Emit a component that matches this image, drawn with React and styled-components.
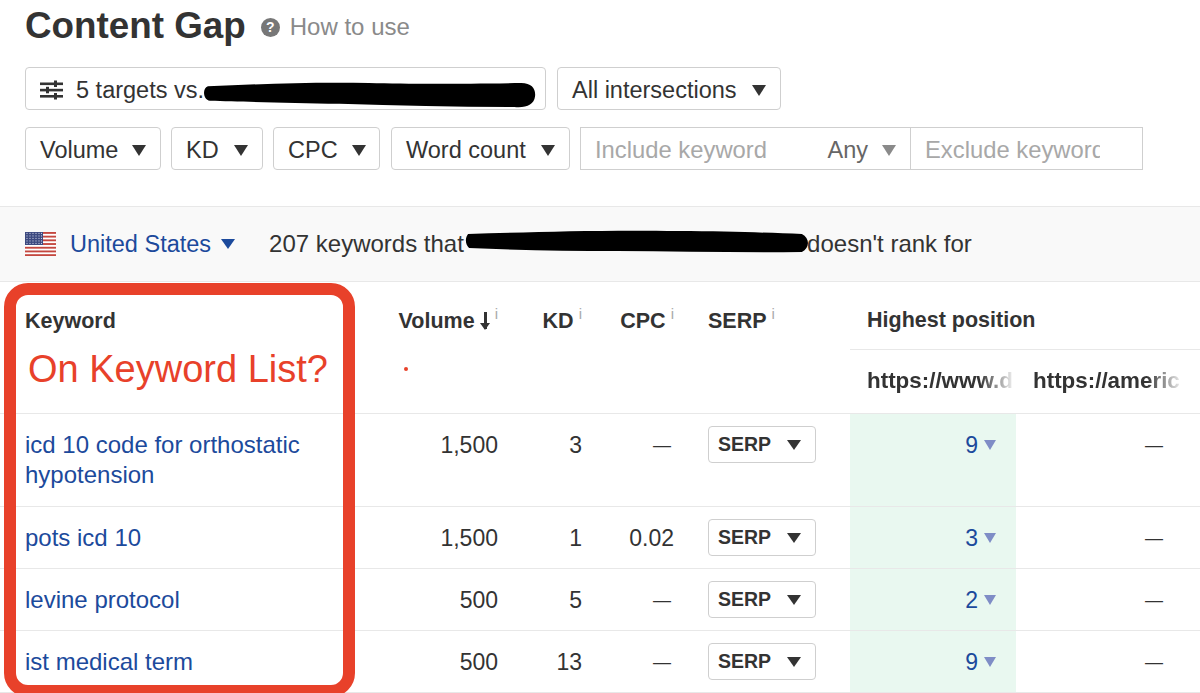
import styled, { createGlobalStyle } from "styled-components";

const GlobalStyle = createGlobalStyle`
  html, body { margin: 0; padding: 0; background: #fff; }
  body { font-family: "Liberation Sans", Arial, sans-serif; color: #333; overflow: hidden; }
`;

const rows = [
  { keyword: "icd 10 code for orthostatic hypotension", volume: "1,500", kd: "3", cpc: "—", pos: "9", tall: true },
  { keyword: "pots icd 10", volume: "1,500", kd: "1", cpc: "0.02", pos: "3" },
  { keyword: "levine protocol", volume: "500", kd: "5", cpc: "—", pos: "2" },
  { keyword: "ist medical term", volume: "500", kd: "13", cpc: "—", pos: "9" },
];

function App() {
  return (
    <Page>
      <GlobalStyle />
      <Top>
        <TitleRow>
          <Title>Content Gap</Title>
          <HelpDot>?</HelpDot>
          <HowTo>How to use</HowTo>
        </TitleRow>
        <FilterRow>
          <TargetButton>
            <SlidersIcon />
            5 targets vs.
            <TargetScribble viewBox="0 0 340 26" preserveAspectRatio="none">
              <path d="M6 5 C60 3 110 1 170 2 C210 3 260 3 325 2 C336 2 340 8 339 15 C338 23 330 26 318 25 C260 25 200 24 140 22 C90 21 40 20 8 19 C1 18 0 7 6 5 Z" />
            </TargetScribble>
          </TargetButton>
          <IntersectionsDrop>All intersections<Caret /></IntersectionsDrop>
        </FilterRow>
        <FilterRow>
          <Drop $w={136}>Volume<Caret /></Drop>
          <Drop $w={92}>KD<Caret /></Drop>
          <Drop $w={107}>CPC<Caret /></Drop>
          <WordCountDrop $w={179}>Word count<Caret /></WordCountDrop>
          <KeywordGroup>
            <IncludeBox>
              <Placeholder>Include keyword</Placeholder>
              <AnyLabel>Any<Caret $color="#8a8a8a" /></AnyLabel>
            </IncludeBox>
            <ExcludeBox>
              <Placeholder>Exclude keyword</Placeholder>
            </ExcludeBox>
          </KeywordGroup>
        </FilterRow>
      </Top>

      <InfoBar>
        <Flag />
        <Country>United States<Caret $color="#1c4a9c" $small /></Country>
        <Summary>
          207 keywords that
          <SummaryScribble viewBox="0 0 340 24" preserveAspectRatio="none">
            <path d="M3 4 C70 2 130 0 210 1 C260 1 300 3 332 4 C340 8 340 18 332 22 C270 23 210 21 150 21 C100 21 50 20 4 18 C0 14 0 8 3 4 Z" />
          </SummaryScribble>
          <SummaryEnd>doesn't rank for</SummaryEnd>
        </Summary>
      </InfoBar>

      <HeadRow>
        <KeywordHead>
          <HeadLabel>Keyword</HeadLabel>
          <Annotation>On Keyword List?</Annotation>
        </KeywordHead>
        <NumHead>Volume<SortArrow /><Info>i</Info></NumHead>
        <NumHead>KD<Info>i</Info></NumHead>
        <NumHead>CPC<Info>i</Info></NumHead>
        <SerpHead>SERP<Info>i</Info></SerpHead>
        <GroupHead>
          <GroupTitle>Highest position</GroupTitle>
          <UrlRow>
            <UrlCell $w={166}>https://www.d</UrlCell>
            <UrlCell $w={168}>https://americ</UrlCell>
          </UrlRow>
        </GroupHead>
        <RedDot />
      </HeadRow>

      {rows.map((r) => (
        <Row key={r.keyword} $tall={r.tall}>
          <KeywordCell><a href="#k">{r.keyword}</a></KeywordCell>
          <NumCell>{r.volume}</NumCell>
          <NumCell>{r.kd}</NumCell>
          <NumCell $dash={r.cpc === "—"}>{r.cpc}</NumCell>
          <SerpCell><SerpButton>SERP<Caret $small /></SerpButton></SerpCell>
          <PosCell>{r.pos}<Caret $color="#7f8dc6" $small /></PosCell>
          <DashCell>—</DashCell>
        </Row>
      ))}

      <RedFrame />
    </Page>
  );
}

function SlidersIcon() {
  return (
    <svg width="23" height="20" viewBox="0 0 23 20" style={{ flex: "none" }}>
      <g fill="#333">
        <rect x="0" y="2.5" width="23" height="2.6" />
        <rect x="0" y="8.8" width="23" height="2.6" />
        <rect x="0" y="15" width="23" height="2.6" />
        <rect x="14" y="0.5" width="3" height="6.5" />
        <rect x="6" y="6.8" width="3" height="6.5" />
        <rect x="14" y="13" width="3" height="6.5" />
      </g>
    </svg>
  );
}

function Flag() {
  const stripes = [0, 2, 4, 6, 8, 10, 12];
  const dotRows = [2, 4.5, 7, 9.5, 12];
  const dotCols = [2, 5, 8, 11, 14, 16.5];
  return (
    <svg width="31" height="24" viewBox="0 0 31 24" style={{ flex: "none" }}>
      <rect width="31" height="24" fill="#fff" />
      {stripes.map((s) => (
        <rect key={s} y={s * 1.85} width="31" height="1.85" fill="#c4473f" />
      ))}
      <rect width="18" height="13" fill="#3d4a80" />
      {dotRows.map((y) =>
        dotCols.map((x) => <circle key={`${x}-${y}`} cx={x} cy={y - 0.6} r="0.6" fill="#c8cde0" />)
      )}
    </svg>
  );
}

const Page = styled.div`
  position: relative;
  width: 1200px;
  height: 693px;
  overflow: hidden;
  background: #fff;
`;

const Top = styled.div`
  height: 206px;
  padding-left: 25px;
  box-sizing: border-box;
`;

const TitleRow = styled.div`
  display: flex;
  align-items: center;
  height: 52px;
`;

const Title = styled.h1`
  margin: 0;
  font-size: 36.8px;
  font-weight: 700;
  color: #333;
`;

const HelpDot = styled.span`
  width: 19px;
  height: 19px;
  margin: 2px 0 0 15px;
  border-radius: 50%;
  background: #777;
  color: #fff;
  font-size: 14px;
  font-weight: 700;
  line-height: 19px;
  text-align: center;
`;

const HowTo = styled.span`
  margin: 2px 0 0 10px;
  font-size: 24px;
  color: #8a8a8a;
`;

const FilterRow = styled.div`
  display: flex;
  gap: 10px;
  margin-top: 15px;

  & + & {
    margin-top: 17px;
  }
`;

const Drop = styled.div`
  display: flex;
  align-items: center;
  justify-content: space-between;
  box-sizing: border-box;
  width: ${(p) => (p.$w ? `${p.$w}px` : "224px")};
  height: 43px;
  padding: 3px 14px 0;
  border: 1.5px solid #cfcfcf;
  border-radius: 4px;
  font-size: 23.5px;
  color: #333;
  background: #fff;
`;

const IntersectionsDrop = styled(Drop)`
  margin-left: 1px;
`;

const WordCountDrop = styled(Drop)`
  margin-left: 1px;
`;

const TargetButton = styled(Drop)`
  position: relative;
  justify-content: flex-start;
  gap: 13px;
  width: 521px;
  white-space: nowrap;
`;

const TargetScribble = styled.svg`
  position: absolute;
  left: 176px;
  top: 13px;
  width: 334px;
  height: 27px;
  fill: #000;
`;

const Caret = styled.span`
  flex: none;
  width: 0;
  height: 0;
  margin-left: ${(p) => (p.$small ? "10px" : "14px")};
  border-left: 7px solid transparent;
  border-right: 7px solid transparent;
  border-top: ${(p) => (p.$small ? "10px" : "11px")} solid ${(p) => p.$color || "#333"};
`;

const KeywordGroup = styled.div`
  display: flex;
  height: 43px;
  box-sizing: border-box;
  border: 1.5px solid #cfcfcf;
  width: 563px;
`;

const IncludeBox = styled.div`
  display: flex;
  align-items: center;
  justify-content: space-between;
  width: 330px;
  padding: 3px 14px 0 14px;
  box-sizing: border-box;
  border-right: 1.5px solid #cfcfcf;
`;

const ExcludeBox = styled.div`
  display: flex;
  align-items: center;
  flex: 1;
  min-width: 0;
  padding: 3px 42px 0 14px;
  overflow: hidden;
  white-space: nowrap;
`;

const Placeholder = styled.span`
  font-size: 23.8px;
  color: #a8a8a8;
  white-space: nowrap;
  overflow: hidden;
`;

const AnyLabel = styled.span`
  display: flex;
  align-items: center;
  font-size: 23.5px;
  color: #666;
`;

const InfoBar = styled.div`
  display: flex;
  align-items: center;
  height: 76px;
  box-sizing: border-box;
  padding-left: 25px;
  background: #f9f9f9;
  border-top: 1.5px solid #e8e8e8;
  border-bottom: 1.5px solid #e8e8e8;
`;

const Country = styled.span`
  display: flex;
  align-items: center;
  margin-left: 14px;
  font-size: 23.5px;
  color: #1c4a9c;
`;

const Summary = styled.span`
  position: relative;
  display: flex;
  margin-left: 34px;
  width: 720px;
  font-size: 24px;
  color: #333;
  white-space: nowrap;
`;

const SummaryEnd = styled.span`
  position: absolute;
  left: 538px;
`;

const SummaryScribble = styled.svg`
  position: absolute;
  left: 196px;
  top: 0;
  width: 345px;
  height: 24px;
  fill: #000;
`;

const columns = "380px 118px 84px 92px 176px 166px 184px";

const HeadRow = styled.div`
  position: relative;
  display: grid;
  grid-template-columns: ${columns};
  height: 132px;
  box-sizing: border-box;
  border-bottom: 1.5px solid #e8e8e8;
  font-size: 21.5px;
  font-weight: 700;
  color: #333;
`;

const KeywordHead = styled.div`
  padding: 27px 0 0 25px;
`;

const HeadLabel = styled.div`
  line-height: 24px;
`;

const Annotation = styled.div`
  margin: 14px 0 0 3px;
  font-size: 38px;
  font-weight: 400;
  line-height: 44px;
  color: #e8412a;
  white-space: nowrap;
`;

const NumHead = styled.div`
  display: flex;
  justify-content: flex-end;
  padding-top: 27px;
  line-height: 24px;
  white-space: nowrap;
`;

const SerpHead = styled.div`
  display: flex;
  padding: 27px 0 0 34px;
  line-height: 24px;
`;

const SortArrow = styled.span`
  position: relative;
  flex: none;
  width: 3px;
  height: 17px;
  margin: 3px 3px 0 9px;
  background: #333;

  &::after {
    content: "";
    position: absolute;
    left: -3.5px;
    bottom: -1px;
    border-left: 5px solid transparent;
    border-right: 5px solid transparent;
    border-top: 7px solid #333;
  }
`;

const Info = styled.span`
  margin: -7px 0 0 5px;
  font-size: 15px;
  font-weight: 400;
  color: #aaa;
`;

const GroupHead = styled.div`
  grid-column: 6 / 8;
  display: flex;
  flex-direction: column;
`;

const GroupTitle = styled.div`
  height: 68px;
  box-sizing: border-box;
  padding: 26px 0 0 17px;
  line-height: 24px;
  border-bottom: 1.5px solid #e8e8e8;
`;

const UrlRow = styled.div`
  display: flex;
`;

const UrlCell = styled.div`
  width: ${(p) => p.$w}px;
  box-sizing: border-box;
  padding-left: 17px;
  padding-top: 19px;
  font-size: 22.4px;
  line-height: 24px;
  white-space: nowrap;
  -webkit-mask-image: linear-gradient(to right, #000 78%, transparent 100%);
  mask-image: linear-gradient(to right, #000 78%, transparent 100%);
`;

const RedDot = styled.span`
  position: absolute;
  left: 404px;
  top: 85px;
  width: 4px;
  height: 4px;
  border-radius: 50%;
  background: #e8412a;
`;

const Row = styled.div`
  display: grid;
  grid-template-columns: ${columns};
  height: ${(p) => (p.$tall ? "93px" : "62px")};
  box-sizing: border-box;
  border-bottom: 1.5px solid #e8e8e8;
  font-size: 23px;
  line-height: 30px;
  color: #333;
`;

const KeywordCell = styled.div`
  padding: 16px 70px 0 25px;
  font-size: 24px;

  a {
    color: #1c4a9c;
    text-decoration: none;
  }
`;

const NumCell = styled.div`
  padding: 16px ${(p) => (p.$dash ? "3px" : "0")} 0 0;
  font-size: ${(p) => (p.$dash ? "18px" : "23px")};
  text-align: right;
`;

const SerpCell = styled.div`
  padding: 12px 0 0 34px;
`;

const SerpButton = styled.div`
  display: flex;
  align-items: center;
  justify-content: space-between;
  box-sizing: border-box;
  width: 108px;
  height: 37px;
  padding: 0 14px 2px 9px;
  border: 1.5px solid #cfcfcf;
  border-radius: 4px;
  font-size: 19.5px;
  font-weight: 700;

  span {
    margin-top: 3px;
  }
`;

const PosCell = styled.div`
  display: flex;
  justify-content: flex-end;
  padding: 16px 20px 0 0;
  background: #e9f8f0;
  color: #1c4a9c;

  span {
    margin: 10px 0 0 6px;
    border-left-width: 6.5px;
    border-right-width: 6.5px;
  }
`;

const DashCell = styled.div`
  padding: 16px 37px 0 0;
  font-size: 18px;
  text-align: right;
`;

const RedFrame = styled.div`
  position: absolute;
  left: 4px;
  top: 283px;
  width: 351px;
  height: 414px;
  box-sizing: border-box;
  border: 12px solid #e8412a;
  border-radius: 24px;
  pointer-events: none;
`;

export default App;
